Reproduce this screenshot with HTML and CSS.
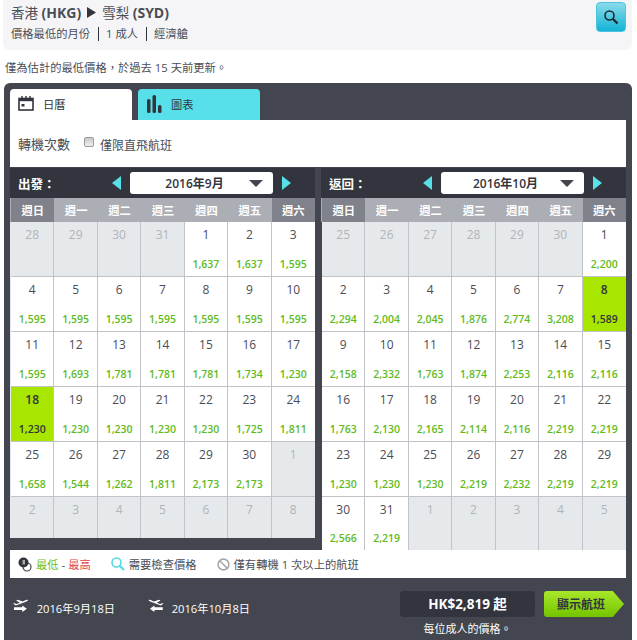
FILE: index.html
```html
<!DOCTYPE html>
<html lang="zh-Hant">
<head>
  <meta charset="UTF-8">
  <meta name="viewport" content="width=device-width, initial-scale=1.0">
  <title>香港 (HKG) - 雪梨 (SYD)</title>
  <link rel="stylesheet" href="styles.css">
</head>
<body>
  <div class="summary">
    <div>
      <div class="route">香港 <b>(HKG)</b><svg class="route-arrow" width="9" height="11" viewBox="0 0 9 11"><path d="M0 0 L9 5.5 L0 11 Z"/></svg>雪梨 <b>(SYD)</b></div>
      <div class="trip"><span>價格最低的月份</span><span>1 成人</span><span>經濟艙</span></div>
    </div>
    <button class="search-btn" type="button">
      <svg width="16" height="16" viewBox="0 0 16 16" fill="none" stroke="#1b2a33"><circle cx="6.5" cy="6.5" r="4.5" stroke-width="1.6"/><path d="M10 10 L14.5 14.5" stroke-width="2.4"/></svg>
    </button>
  </div>

  <p class="note">僅為估計的最低價格&#xFF0C;於過去 15 天前更新。</p>

  <div class="panel">
    <div class="tabs">
      <div class="tab tab-active">
        <svg width="16" height="15" viewBox="0 0 16 15" fill="none" stroke="#32353d"><rect x="1" y="2.5" width="14" height="11.5" stroke-width="1.6"/><path d="M1 4 H15" stroke-width="2.4"/><path d="M4 0 V3 M8 0 V3 M12 0 V3" stroke-width="1.4"/><rect x="3.5" y="8" width="3" height="2.5" fill="#32353d" stroke="none"/></svg>
        <span>日曆</span>
      </div>
      <div class="tab tab-chart">
        <svg width="15" height="18" viewBox="0 0 15 18" fill="#32353d"><rect x="0" y="4" width="3.5" height="14" rx="1.5"/><rect x="5.5" y="0" width="3.5" height="18" rx="1.5"/><rect x="11" y="10" width="3.5" height="8" rx="1.5"/></svg>
        <span>圖表</span>
      </div>
    </div>

    <div class="options">
      <span class="options-label">轉機次數</span>
      <span class="checkbox"></span>
      <span class="options-text">僅限直飛航班</span>
    </div>

    <div class="calendars">
      <div class="cal">
        <div class="cal-head">
          <span class="cal-title">出發&#xFF1A;</span>
          <span class="nav nav-prev"></span>
          <div class="month"><span>2016年9月</span><i class="caret"></i></div>
          <span class="nav nav-next"></span>
        </div>
        <div class="week">
          <span class="weekend">週日</span><span>週一</span><span>週二</span><span>週三</span><span>週四</span><span>週五</span><span class="weekend">週六</span>
        </div>
        <div class="days days-short">
          <div class="day off"><span class="num">28</span></div>
          <div class="day off"><span class="num">29</span></div>
          <div class="day off"><span class="num">30</span></div>
          <div class="day off"><span class="num">31</span></div>
          <div class="day"><span class="num">1</span><span class="fare">1,637</span></div>
          <div class="day"><span class="num">2</span><span class="fare">1,637</span></div>
          <div class="day"><span class="num">3</span><span class="fare">1,595</span></div>

          <div class="day"><span class="num">4</span><span class="fare">1,595</span></div>
          <div class="day"><span class="num">5</span><span class="fare">1,595</span></div>
          <div class="day"><span class="num">6</span><span class="fare">1,595</span></div>
          <div class="day"><span class="num">7</span><span class="fare">1,595</span></div>
          <div class="day"><span class="num">8</span><span class="fare">1,595</span></div>
          <div class="day"><span class="num">9</span><span class="fare">1,595</span></div>
          <div class="day"><span class="num">10</span><span class="fare">1,595</span></div>

          <div class="day"><span class="num">11</span><span class="fare">1,595</span></div>
          <div class="day"><span class="num">12</span><span class="fare">1,693</span></div>
          <div class="day"><span class="num">13</span><span class="fare">1,781</span></div>
          <div class="day"><span class="num">14</span><span class="fare">1,781</span></div>
          <div class="day"><span class="num">15</span><span class="fare">1,781</span></div>
          <div class="day"><span class="num">16</span><span class="fare">1,734</span></div>
          <div class="day"><span class="num">17</span><span class="fare">1,230</span></div>

          <div class="day selected"><span class="num">18</span><span class="fare">1,230</span></div>
          <div class="day"><span class="num">19</span><span class="fare">1,230</span></div>
          <div class="day"><span class="num">20</span><span class="fare">1,230</span></div>
          <div class="day"><span class="num">21</span><span class="fare">1,230</span></div>
          <div class="day"><span class="num">22</span><span class="fare">1,230</span></div>
          <div class="day"><span class="num">23</span><span class="fare">1,725</span></div>
          <div class="day"><span class="num">24</span><span class="fare">1,811</span></div>

          <div class="day"><span class="num">25</span><span class="fare">1,658</span></div>
          <div class="day"><span class="num">26</span><span class="fare">1,544</span></div>
          <div class="day"><span class="num">27</span><span class="fare">1,262</span></div>
          <div class="day"><span class="num">28</span><span class="fare">1,811</span></div>
          <div class="day"><span class="num">29</span><span class="fare">2,173</span></div>
          <div class="day"><span class="num">30</span><span class="fare">2,173</span></div>
          <div class="day off"><span class="num">1</span></div>

          <div class="day off"><span class="num">2</span></div>
          <div class="day off"><span class="num">3</span></div>
          <div class="day off"><span class="num">4</span></div>
          <div class="day off"><span class="num">5</span></div>
          <div class="day off"><span class="num">6</span></div>
          <div class="day off"><span class="num">7</span></div>
          <div class="day off"><span class="num">8</span></div>
        </div>
      </div>

      <div class="cal">
        <div class="cal-head">
          <span class="cal-title">返回&#xFF1A;</span>
          <span class="nav nav-prev"></span>
          <div class="month"><span>2016年10月</span><i class="caret"></i></div>
          <span class="nav nav-next"></span>
        </div>
        <div class="week">
          <span class="weekend">週日</span><span>週一</span><span>週二</span><span>週三</span><span>週四</span><span>週五</span><span class="weekend">週六</span>
        </div>
        <div class="days days-tall">
          <div class="day off"><span class="num">25</span></div>
          <div class="day off"><span class="num">26</span></div>
          <div class="day off"><span class="num">27</span></div>
          <div class="day off"><span class="num">28</span></div>
          <div class="day off"><span class="num">29</span></div>
          <div class="day off"><span class="num">30</span></div>
          <div class="day"><span class="num">1</span><span class="fare">2,200</span></div>

          <div class="day"><span class="num">2</span><span class="fare">2,294</span></div>
          <div class="day"><span class="num">3</span><span class="fare">2,004</span></div>
          <div class="day"><span class="num">4</span><span class="fare">2,045</span></div>
          <div class="day"><span class="num">5</span><span class="fare">1,876</span></div>
          <div class="day"><span class="num">6</span><span class="fare">2,774</span></div>
          <div class="day"><span class="num">7</span><span class="fare">3,208</span></div>
          <div class="day selected"><span class="num">8</span><span class="fare">1,589</span></div>

          <div class="day"><span class="num">9</span><span class="fare">2,158</span></div>
          <div class="day"><span class="num">10</span><span class="fare">2,332</span></div>
          <div class="day"><span class="num">11</span><span class="fare">1,763</span></div>
          <div class="day"><span class="num">12</span><span class="fare">1,874</span></div>
          <div class="day"><span class="num">13</span><span class="fare">2,253</span></div>
          <div class="day"><span class="num">14</span><span class="fare">2,116</span></div>
          <div class="day"><span class="num">15</span><span class="fare">2,116</span></div>

          <div class="day"><span class="num">16</span><span class="fare">1,763</span></div>
          <div class="day"><span class="num">17</span><span class="fare">2,130</span></div>
          <div class="day"><span class="num">18</span><span class="fare">2,165</span></div>
          <div class="day"><span class="num">19</span><span class="fare">2,114</span></div>
          <div class="day"><span class="num">20</span><span class="fare">2,116</span></div>
          <div class="day"><span class="num">21</span><span class="fare">2,219</span></div>
          <div class="day"><span class="num">22</span><span class="fare">2,219</span></div>

          <div class="day"><span class="num">23</span><span class="fare">1,230</span></div>
          <div class="day"><span class="num">24</span><span class="fare">1,230</span></div>
          <div class="day"><span class="num">25</span><span class="fare">1,230</span></div>
          <div class="day"><span class="num">26</span><span class="fare">2,219</span></div>
          <div class="day"><span class="num">27</span><span class="fare">2,232</span></div>
          <div class="day"><span class="num">28</span><span class="fare">2,219</span></div>
          <div class="day"><span class="num">29</span><span class="fare">2,219</span></div>

          <div class="day"><span class="num">30</span><span class="fare">2,566</span></div>
          <div class="day"><span class="num">31</span><span class="fare">2,219</span></div>
          <div class="day off"><span class="num">1</span></div>
          <div class="day off"><span class="num">2</span></div>
          <div class="day off"><span class="num">3</span></div>
          <div class="day off"><span class="num">4</span></div>
          <div class="day off"><span class="num">5</span></div>
        </div>
      </div>
    </div>

    <div class="legend">
      <div class="legend-item">
        <svg width="14" height="15" viewBox="0 0 14 15"><circle cx="9" cy="10" r="4" fill="#fff" stroke="#43464f" stroke-width="1.2"/><circle cx="5.5" cy="5.5" r="5" fill="#32353d"/><rect x="4.5" y="3" width="2.5" height="4.5" fill="#aaa"/></svg>
        <span><span class="low">最低</span> - <span class="high">最高</span></span>
      </div>
      <div class="legend-item">
        <svg width="14" height="14" viewBox="0 0 14 14" fill="none" stroke="#4fdbe6"><circle cx="5.5" cy="5.5" r="4.5" stroke-width="1.6"/><path d="M9 9 L13 13" stroke-width="2.2"/></svg>
        <span>需要檢查價格</span>
      </div>
      <div class="legend-item">
        <svg width="13" height="13" viewBox="0 0 13 13" fill="none" stroke="#a6a8ac" stroke-width="1.6"><circle cx="6.5" cy="6.5" r="5.4"/><path d="M2.8 2.8 L10.2 10.2"/></svg>
        <span>僅有轉機 1 次以上的航班</span>
      </div>
    </div>

    <div class="footer">
      <div class="dates">
        <div class="date">
          <svg width="17" height="16" viewBox="0 0 17 16" fill="#fff"><path d="M0 6.5 L1.5 6 L4 7 L7.5 5.6 L3.5 3 L5 2.4 L10.5 4.2 L14 2.6 Q16.5 1.8 16.5 2.6 Q16.5 3.4 14 4.6 L3 8.6 Z"/><path d="M1 10.5 H10 V8.5 L15 12 L10 15.5 V13.5 H1 Z"/></svg>
          <span>2016年9月18日</span>
        </div>
        <div class="date">
          <svg width="17" height="16" viewBox="0 0 17 16" fill="#fff"><path d="M17 6.5 L15.5 6 L13 7 L9.5 5.6 L13.5 3 L12 2.4 L6.5 4.2 L3 2.6 Q0.5 1.8 0.5 2.6 Q0.5 3.4 3 4.6 L14 8.6 Z"/><path d="M16 10.5 H7 V8.5 L2 12 L7 15.5 V13.5 H16 Z"/></svg>
          <span>2016年10月8日</span>
        </div>
      </div>
      <div class="buy">
        <div class="buy-row">
          <div class="price">HK$2,819 起</div>
          <button class="show-btn" type="button">顯示航班</button>
        </div>
        <div class="price-note">每位成人的價格。</div>
      </div>
    </div>
  </div>
</body>
</html>
```

FILE: styles.css
```css
html, body {
  margin: 0;
  padding: 0;
  background-color: white;
  overflow: hidden;
}
body {
  width: 637px;
  height: 640px;
  font-family: "Open Sans", "Noto Sans CJK TC", sans-serif;
  color: #4a4d55;
}

.summary {
  display: flex;
  justify-content: space-between;
  align-items: flex-start;
  height: 50px;
  box-sizing: border-box;
  margin: 0 5px 0 3px;
  padding: 2px 6px 0 8px;
  background-color: #f5f5f7;
  border-radius: 0 0 6px 6px;
}
.route {
  font-size: 13.5px;
  line-height: 20px;
  margin-top: 1px;
}
.route b {
  font-size: 14px;
  font-weight: 700;
}
.route-arrow {
  fill: #32353d;
  margin: 0 6px;
}
.trip {
  display: flex;
  font-size: 11.3px;
  line-height: 14px;
  margin-top: 4px;
}
.trip span {
  padding-right: 8px;
  margin-right: 7px;
  border-right: 1px solid #32353d;
}
.trip span:last-child {
  border-right: none;
}
.search-btn {
  display: flex;
  justify-content: center;
  align-items: center;
  width: 30px;
  height: 30px;
  padding: 0;
  border: 1px solid #4cc3de;
  border-radius: 4px;
  background: linear-gradient(#8adbea, #14b3d6);
}

.note {
  margin: 10px 0 0 5px;
  height: 23px;
  font-size: 11.3px;
  line-height: 15px;
}

.panel {
  box-sizing: border-box;
  width: 628px;
  height: 557px;
  margin-left: 4px;
  padding: 6px 6px 0;
  background-color: #43464f;
  border-radius: 6px 6px 0 0;
}

.tabs {
  display: flex;
  gap: 6px;
  height: 31px;
}
.tab {
  display: flex;
  align-items: center;
  width: 122px;
  box-sizing: border-box;
  border-radius: 4px 4px 0 0;
  font-size: 11.3px;
  color: #32353d;
}
.tab-active {
  gap: 9px;
  padding: 0 0 2px 8px;
  background-color: white;
}
.tab-chart {
  gap: 9px;
  padding: 0 0 2px 9px;
  background-color: #58e0ea;
}

.options {
  display: flex;
  align-items: center;
  height: 47px;
  padding-left: 8px;
  background-color: white;
  margin-bottom: 1px;
}
.options-label {
  font-size: 13px;
  margin-right: 14px;
}
.options-text {
  font-size: 12px;
  margin-left: 6px;
  padding-top: 2px;
}
.checkbox {
  width: 8px;
  height: 8px;
  margin-bottom: 3px;
  border: 1px solid #9a9a9a;
  border-radius: 2px;
  background: linear-gradient(#c8c8c8, #f0f0f0);
}

.calendars {
  display: flex;
  align-items: flex-start;
  gap: 6px;
  height: 382px;
}
.cal {
  width: 305px;
}
.cal-head {
  display: flex;
  align-items: center;
  height: 30px;
  padding-left: 8px;
  background-color: #32353d;
}
.cal-title {
  width: 94px;
  font-size: 12.5px;
  font-weight: 700;
  color: white;
}
.nav {
  width: 0;
  height: 0;
  border-top: 7px solid transparent;
  border-bottom: 7px solid transparent;
}
.nav-prev {
  border-right: 9px solid #58e0ea;
}
.nav-next {
  border-left: 9px solid #58e0ea;
}
.month {
  display: flex;
  align-items: center;
  box-sizing: border-box;
  width: 143px;
  height: 22px;
  margin: 0 9px;
  padding: 0 10px 0 0;
  background-color: white;
  border-radius: 3px;
  font-size: 12px;
  font-weight: 600;
  color: #32353d;
}
.month span {
  flex: 1;
  text-align: center;
  padding-left: 10px;
}
.caret {
  width: 0;
  height: 0;
  border-left: 7px solid transparent;
  border-right: 7px solid transparent;
  border-top: 7px solid #43464f;
}

.week {
  display: grid;
  grid-template-columns: repeat(7, 1fr);
  height: 24px;
  padding-left: 1px;
  background-color: #abaeb5;
}
.week span {
  display: flex;
  justify-content: center;
  align-items: center;
  font-size: 11.3px;
  font-weight: 700;
  color: white;
}
.week .weekend {
  background-color: #7f828a;
}

.days {
  display: grid;
  grid-template-columns: repeat(7, 1fr);
  padding-left: 1px;
}
.days-short {
  grid-template-rows: repeat(5, 55px) 41px;
  background-color: #e6e9eb;
}
.days-tall {
  grid-template-rows: repeat(5, 55px) 53px;
}
.day {
  display: flex;
  flex-direction: column;
  align-items: center;
  justify-content: space-between;
  box-sizing: border-box;
  padding: 4px 0 5px;
  background-color: white;
  border-right: 1px solid #c2c3c8;
  border-bottom: 1px solid #c2c3c8;
}
.day:nth-child(7n) {
  border-right: none;
}
.days .day:nth-last-child(-n+7) {
  border-bottom: none;
}
.num {
  font-size: 12px;
  line-height: 18px;
  color: #4a4d55;
}
.fare {
  font-size: 10.5px;
  font-weight: 600;
  line-height: 14px;
  color: #5fbb1c;
}
.off {
  background-color: #e6e9eb;
}
.off .num {
  color: #b1b4b8;
}
.selected {
  background-color: #a8e600;
}
.selected .num {
  color: #32353d;
  font-weight: 600;
}
.selected .fare {
  color: #32353d;
}

.legend {
  display: flex;
  align-items: center;
  gap: 20px;
  height: 28px;
  padding-left: 8px;
  background-color: white;
  font-size: 11.3px;
}
.legend-item {
  display: flex;
  align-items: center;
  gap: 4px;
}
.low {
  color: #6cc01e;
}
.high {
  color: #e0474c;
}

.footer {
  display: flex;
  justify-content: space-between;
  align-items: flex-start;
  padding: 13px 2px 0 3px;
}
.dates {
  display: flex;
  gap: 33px;
  padding-top: 6px;
}
.date {
  display: flex;
  gap: 8px;
  width: 102px;
  font-size: 11.2px;
  white-space: nowrap;
  color: white;
}
.date span {
  padding-top: 3px;
}
.buy {
  display: flex;
  flex-direction: column;
}
.buy-row {
  display: flex;
  gap: 9px;
}
.price {
  width: 135px;
  height: 26px;
  background-color: #32353d;
  border-radius: 4px;
  font-size: 13.5px;
  font-weight: 700;
  line-height: 26px;
  text-align: center;
  color: white;
}
.show-btn {
  width: 80px;
  height: 26px;
  padding: 0 6px 0 0;
  border: none;
  background: linear-gradient(#a8e82a, #74c400);
  clip-path: polygon(0 0, 86% 0, 100% 50%, 86% 100%, 0 100%);
  border-radius: 3px;
  font-family: inherit;
  font-size: 12px;
  font-weight: 600;
  color: #32353d;
}
.price-note {
  width: 135px;
  margin-top: 4px;
  font-size: 11px;
  line-height: 16px;
  text-align: center;
  color: white;
}
```
